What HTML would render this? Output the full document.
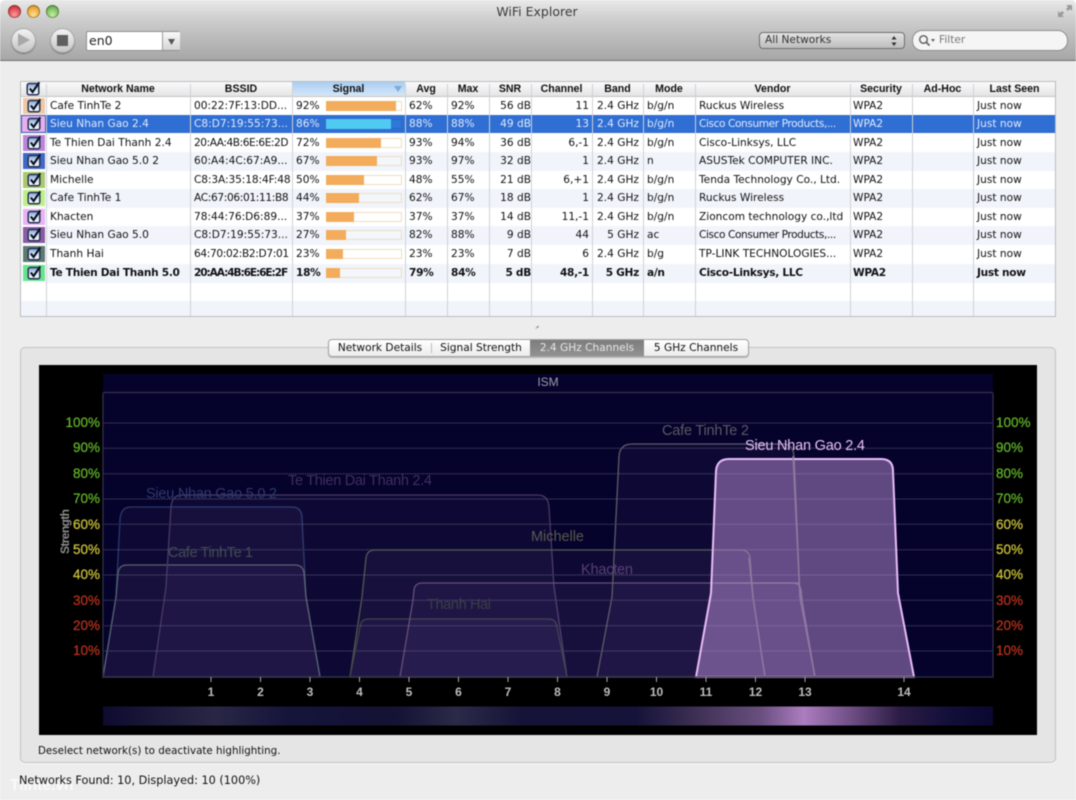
<!DOCTYPE html>
<html><head><meta charset="utf-8"><title>WiFi Explorer</title>
<style>
html,body{margin:0;padding:0;width:1076px;height:800px;overflow:hidden;background:#fff}
#w{position:relative;width:1076px;height:800px;background:#ededed;overflow:hidden;font:10.6px "DejaVu Sans",sans-serif;color:#111;border-radius:5px 5px 0 0;filter:blur(.4px)}
#w div,#w span,#w svg{position:absolute}
#tb{left:0;top:0;width:1076px;height:60px;background:linear-gradient(#e9e9e9,#cfcfcf 30%,#a6a6a6);border-bottom:1px solid #6f6f6f}
.l{width:13px;height:13px;border-radius:50%;top:5px;box-shadow:inset 0 0 0 1px rgba(0,0,0,.3)}
#title{left:-1px;width:1076px;text-align:center;top:4px;font-size:12.5px;color:#3a3a3a}
.rb{width:25px;height:25px;top:28px;border-radius:50%;background:linear-gradient(#f4f4f4,#c4c4c4);box-shadow:0 1px 1px rgba(0,0,0,.35),inset 0 0 0 1px #a5a5a5}
#cb{left:86px;top:31px;width:92px;height:18px;background:#fff;border:1px solid #8f8f8f;border-radius:2px}
#cba{left:75px;top:0;width:17px;height:18px;background:linear-gradient(#fafafa,#d5d5d5);border-left:1px solid #9a9a9a}
#pop{left:759px;top:32px;width:144px;height:15px;border:1px solid #6e6e6e;border-radius:4px;background:linear-gradient(#e2e2e2,#bdbdbd);font-size:10.6px;color:#333}
#fil{left:912px;top:30px;width:154px;height:19px;border:1px solid #8e8e8e;border-radius:10px;background:#f5f5f5;color:#777;font-size:10.6px}
#tbl{left:20px;top:81px;width:1034px;height:234px;background:#fff;border:1px solid #b9bcc1;overflow:hidden}
.h{top:0;height:14px;line-height:14px;text-align:center;font:bold 10.6px/14px "Liberation Sans",sans-serif;background:linear-gradient(#fbfbfb,#e4e4e4);border-bottom:1px solid #c5c5c5;color:#111}
.r{left:0;width:1035px;height:19px;line-height:19px;white-space:nowrap}
.a{background:#f1f5fb}
.s{background:#2f6ed2;color:#dfeaff}
.b{font-weight:bold;color:#111;letter-spacing:-.3px}
.sw{left:1px;top:0;width:24px;height:18px;box-sizing:border-box;border:1px solid #fff}
.r svg{left:6px;top:1px}
.bg{left:305px;top:4px;width:76px;height:10px;background:#fff;box-shadow:inset 0 0 0 1px #efdcc0}
.bg span{left:0;top:0;height:10px;background:#f2ac5c}
.a .bg{background:#f3f6fb}
.s .bg{background:#2d78d8;box-shadow:inset 0 0 0 1px #2b68c4}
.s .bg span{background:#4fcaf0}
.t{top:0}
.n{left:29px}.m{left:173px}.p{left:275px}.g{left:388px}.x{left:430px}
.o{width:56px;left:454px;text-align:right}
.c{width:58px;left:510px;text-align:right}
.f{width:50px;left:568px;text-align:right}
.d{left:626px}.v{left:678px}.e{left:832px}.j{left:956px}
.v2{top:2px;width:1px;height:233px;background:#ced1d6}
#pan{left:20px;top:347px;width:1034px;height:414px;background:#e5e5e5;border:1px solid #c2c2c2;border-radius:5px;box-shadow:0 1px 0 #f8f8f8}
#seg{left:328px;top:339px;width:419px;height:16px;background:linear-gradient(#fff,#ececec);border:1px solid #a2a2a2;border-radius:4px;line-height:17px;text-align:center;box-shadow:0 1px 1px rgba(0,0,0,.2);overflow:hidden}
#seg span{top:0;height:16px;color:#111}
#ch{left:39px;top:365px}
</style></head><body><div id="w">
<svg width="0" height="0" style="left:0;top:0"><defs>
<linearGradient id="k" x1="0" y1="0" x2="0" y2="1"><stop offset="0" stop-color="#7d9ed6"/><stop offset=".5" stop-color="#d8e5f6"/><stop offset="1" stop-color="#f2f6fc"/></linearGradient>
<symbol id="ck" viewBox="0 0 15 15"><rect x="1.2" y="2.5" width="11.6" height="11.3" rx="2" fill="url(#k)" stroke="#25304f" stroke-width="1.5"/><path d="M3.8 7.5L6.6 11L13.3 1.3" fill="none" stroke="#06101f" stroke-width="2.1"/></symbol>
<linearGradient id="st" x1="0" x2="1" y1="0" y2="0">
<stop offset="0" stop-color="#0e0b30"/><stop offset=".126" stop-color="#2a2745"/><stop offset=".21" stop-color="#15143a"/><stop offset=".33" stop-color="#141335"/><stop offset=".397" stop-color="#2b2a48"/><stop offset=".47" stop-color="#151438"/><stop offset=".6" stop-color="#16133a"/><stop offset=".66" stop-color="#3a2d50"/><stop offset=".74" stop-color="#6a4f80"/><stop offset=".787" stop-color="#ab7dbf"/><stop offset=".84" stop-color="#6f4f85"/><stop offset=".895" stop-color="#2c1c45"/><stop offset=".95" stop-color="#12103a"/><stop offset="1" stop-color="#0a0830"/>
</linearGradient></defs></svg>

<div id="tb">
<div class="l" style="left:8px;background:radial-gradient(circle at 50% 75%,#ff9a9a,#d8434a 60%,#a8262c)"></div>
<div class="l" style="left:27px;background:radial-gradient(circle at 50% 75%,#ffe08e,#e8a63a 60%,#b87d18)"></div>
<div class="l" style="left:46px;background:radial-gradient(circle at 50% 75%,#c6f0a0,#74b95c 60%,#4e8d3a)"></div>
<div id="title">WiFi Explorer</div>
<svg style="left:1057px;top:4px" width="16" height="14" viewBox="0 0 16 14"><path d="M9 1h6v6l-2-2-2 2-2-2 2-2zM1 13V7l2 2 2-2 2 2-2 2 2 2z" fill="#9a9a9a"/></svg>
<div class="rb" style="left:11px"></div>
<svg style="left:17px;top:33px" width="14" height="14"><path d="M1 0.500L13 7L1 13.500z" fill="#a8a8a8"/></svg>
<div class="rb" style="left:50px"></div>
<div style="left:57px;top:35px;width:11px;height:11px;background:#5f5f5f"></div>
<div id="cb"><span style="left:2px;top:1px;font-size:12.5px;color:#222">en0</span><div id="cba"><svg style="left:5px;top:7px" width="7" height="6"><path d="M0 0H7L3.500 6z" fill="#555"/></svg></div></div>
<div id="pop"><span style="left:5px;top:0;line-height:15px">All Networks</span><svg style="left:131px;top:3px" width="6" height="10"><path d="M3 0L5.500 3.500H.5zM3 10L.5 6.500H5.500z" fill="#333"/></svg></div>
<div id="fil"><svg style="left:5px;top:3px" width="18" height="13"><circle cx="5.500" cy="5.500" r="3.800" fill="none" stroke="#666" stroke-width="1.500"/><path d="M8.300 8.300L11.500 11.500" stroke="#666" stroke-width="1.800"/><path d="M13 5H17L15 8z" fill="#666"/></svg><span style="left:26px;top:3px">Filter</span></div>
</div>

<div id="tbl">
<div class="h" style="left:0;width:25px"><svg style="left:5px;top:-1px" width="15" height="15"><use href="#ck"/></svg></div>
<div class="h" style="left:25px;width:144px;">Network Name</div>
<div class="h" style="left:169px;width:102px">BSSID</div>
<div class="h" style="left:271px;width:113px;background:linear-gradient(#a9cff3,#d6e6f6)">Signal<svg style="left:102px;top:4px" width="8" height="6"><path d="M0 0H8L4 6z" fill="#7fabd8"/></svg></div>
<div class="h" style="left:384px;width:42px">Avg</div>
<div class="h" style="left:426px;width:42px">Max</div>
<div class="h" style="left:468px;width:42px">SNR</div>
<div class="h" style="left:510px;width:61px">Channel</div>
<div class="h" style="left:571px;width:51px">Band</div>
<div class="h" style="left:622px;width:52px">Mode</div>
<div class="h" style="left:674px;width:155px">Vendor</div>
<div class="h" style="left:829px;width:62px">Security</div>
<div class="h" style="left:891px;width:61px">Ad-Hoc</div>
<div class="h" style="left:952px;width:83px">Last Seen</div>

<div class="r" style="top:14.500px"><div class="sw" style="background:#efc9a6"></div><svg width="15" height="15"><use href="#ck"/></svg><span class="t n">Cafe TinhTe 2</span><span class="t m">00:22:7F:13:DD...</span><span class="t p">92%</span><div class="bg"><span style="width:70px"></span></div><span class="t g">62%</span><span class="t x">92%</span><span class="t o">56 dB</span><span class="t c">11</span><span class="t f">2.4 GHz</span><span class="t d">b/g/n</span><span class="t v">Ruckus Wireless</span><span class="t e">WPA2</span><span class="t j">Just now</span></div>
<div class="r s" style="top:33px;height:18px"><div class="sw" style="background:#e8aef2;left:0;width:25px;border-color:#2f5fae"></div><svg width="15" height="15"><use href="#ck"/></svg><span class="t n">Sieu Nhan Gao 2.4</span><span class="t m">C8:D7:19:55:73...</span><span class="t p">86%</span><div class="bg"><span style="width:65px"></span></div><span class="t g">88%</span><span class="t x">88%</span><span class="t o">49 dB</span><span class="t c">13</span><span class="t f">2.4 GHz</span><span class="t d">b/g/n</span><span class="t v" style="letter-spacing:-.42px">Cisco Consumer Products,...</span><span class="t e">WPA2</span><span class="t j">Just now</span></div>
<div class="r" style="top:51.500px"><div class="sw" style="background:#bd85d8"></div><svg width="15" height="15"><use href="#ck"/></svg><span class="t n">Te Thien Dai Thanh 2.4</span><span class="t m" style="letter-spacing:-.45px">20:AA:4B:6E:6E:2D</span><span class="t p">72%</span><div class="bg"><span style="width:55px"></span></div><span class="t g">93%</span><span class="t x">94%</span><span class="t o">36 dB</span><span class="t c">6,-1</span><span class="t f">2.4 GHz</span><span class="t d">b/g/n</span><span class="t v">Cisco-Linksys, LLC</span><span class="t e">WPA2</span><span class="t j">Just now</span></div>
<div class="r a" style="top:70px"><div class="sw" style="background:#4268c6"></div><svg width="15" height="15"><use href="#ck"/></svg><span class="t n">Sieu Nhan Gao 5.0 2</span><span class="t m">60:A4:4C:67:A9...</span><span class="t p">67%</span><div class="bg"><span style="width:51px"></span></div><span class="t g">93%</span><span class="t x">97%</span><span class="t o">32 dB</span><span class="t c">1</span><span class="t f">2.4 GHz</span><span class="t d">n</span><span class="t v">ASUSTek COMPUTER INC.</span><span class="t e">WPA2</span><span class="t j">Just now</span></div>
<div class="r" style="top:88.500px"><div class="sw" style="background:#a9c96c"></div><svg width="15" height="15"><use href="#ck"/></svg><span class="t n">Michelle</span><span class="t m" style="letter-spacing:-.1px">C8:3A:35:18:4F:48</span><span class="t p">50%</span><div class="bg"><span style="width:38px"></span></div><span class="t g">48%</span><span class="t x">55%</span><span class="t o">21 dB</span><span class="t c">6,+1</span><span class="t f">2.4 GHz</span><span class="t d">b/g/n</span><span class="t v">Tenda Technology Co., Ltd.</span><span class="t e">WPA2</span><span class="t j">Just now</span></div>
<div class="r a" style="top:107px"><div class="sw" style="background:#bdf08a"></div><svg width="15" height="15"><use href="#ck"/></svg><span class="t n">Cafe TinhTe 1</span><span class="t m" style="letter-spacing:-.35px">AC:67:06:01:11:B8</span><span class="t p">44%</span><div class="bg"><span style="width:33px"></span></div><span class="t g">62%</span><span class="t x">67%</span><span class="t o">18 dB</span><span class="t c">1</span><span class="t f">2.4 GHz</span><span class="t d">b/g/n</span><span class="t v">Ruckus Wireless</span><span class="t e">WPA2</span><span class="t j">Just now</span></div>
<div class="r" style="top:125.500px"><div class="sw" style="background:#eab2f6"></div><svg width="15" height="15"><use href="#ck"/></svg><span class="t n">Khacten</span><span class="t m">78:44:76:D6:89...</span><span class="t p">37%</span><div class="bg"><span style="width:28px"></span></div><span class="t g">37%</span><span class="t x">37%</span><span class="t o">14 dB</span><span class="t c">11,-1</span><span class="t f">2.4 GHz</span><span class="t d">b/g/n</span><span class="t v">Zioncom technology co.,ltd</span><span class="t e">WPA2</span><span class="t j">Just now</span></div>
<div class="r a" style="top:144px"><div class="sw" style="background:#8a5ca4"></div><svg width="15" height="15"><use href="#ck"/></svg><span class="t n">Sieu Nhan Gao 5.0</span><span class="t m">C8:D7:19:55:73...</span><span class="t p">27%</span><div class="bg"><span style="width:20px"></span></div><span class="t g">82%</span><span class="t x">88%</span><span class="t o">9 dB</span><span class="t c">44</span><span class="t f">5 GHz</span><span class="t d">ac</span><span class="t v" style="letter-spacing:-.42px">Cisco Consumer Products,...</span><span class="t e">WPA2</span><span class="t j">Just now</span></div>
<div class="r" style="top:162.500px"><div class="sw" style="background:#5f7a70"></div><svg width="15" height="15"><use href="#ck"/></svg><span class="t n">Thanh Hai</span><span class="t m" style="letter-spacing:-.35px">64:70:02:B2:D7:01</span><span class="t p">23%</span><div class="bg"><span style="width:17px"></span></div><span class="t g">23%</span><span class="t x">23%</span><span class="t o">7 dB</span><span class="t c">6</span><span class="t f">2.4 GHz</span><span class="t d">b/g</span><span class="t v">TP-LINK TECHNOLOGIES...</span><span class="t e">WPA2</span><span class="t j">Just now</span></div>
<div class="r a b" style="top:181.500px"><div class="sw" style="background:#68e48e"></div><svg width="15" height="15"><use href="#ck"/></svg><span class="t n">Te Thien Dai Thanh 5.0</span><span class="t m" style="letter-spacing:-1.100px">20:AA:4B:6E:6E:2F</span><span class="t p">18%</span><div class="bg"><span style="width:14px"></span></div><span class="t g">79%</span><span class="t x">84%</span><span class="t o">5 dB</span><span class="t c">48,-1</span><span class="t f">5 GHz</span><span class="t d">a/n</span><span class="t v">Cisco-Linksys, LLC</span><span class="t e">WPA2</span><span class="t j">Just now</span></div>
<div class="r a" style="top:218.500px;height:16px"></div>

<div class="v2" style="left:25px"></div><div class="v2" style="left:169px"></div><div class="v2" style="left:271px"></div><div class="v2" style="left:384px"></div><div class="v2" style="left:426px"></div><div class="v2" style="left:468px"></div><div class="v2" style="left:510px"></div><div class="v2" style="left:571px"></div><div class="v2" style="left:622px"></div><div class="v2" style="left:674px"></div><div class="v2" style="left:829px"></div><div class="v2" style="left:891px"></div><div class="v2" style="left:952px"></div>
</div>

<svg style="left:534px;top:324px" width="6" height="6"><path d="M1 5L4 1.500L5 3z" fill="#888"/></svg>

<div id="pan"></div>
<svg id="ch" width="998" height="370" viewBox="39 365 998 370">
<rect x="39" y="365" width="998" height="370" fill="#000"/>
<rect x="103" y="374" width="890" height="303" fill="#05022b"/>
<path d="M103 392.500H993" stroke="#34324a" stroke-width="1.200"/>
<path d="M103 423H993M103 448.300H993M103 473.700H993M103 499H993M103 524.300H993M103 549.700H993M103 575H993M103 600.300H993M103 625.700H993M103 651H993" stroke="#5d5b76" stroke-width="1" stroke-dasharray="1 1"/>
<g stroke-width="1.300" fill="rgb(140,115,180)" fill-opacity=".07">
<path d="M103 677L116 597L120 519Q121 507 131 507H292Q302 507 302 519L306 597L320 677z" stroke="#2a3a6c"/>
<path d="M103 677L116 597L118 573Q119 565 127 565H295Q303 565 304 573L306 597L320 677z" stroke="#56646c"/>
<path d="M153 677L166 587L171 507Q172 495 182 495H538Q548 495 549 507L554 587L567 677z" stroke="#4a3a64"/>
<path d="M350 677L362 597L366 558Q367 550 375 550H741Q749 550 750 558L753 597L765 677z" stroke="#565650"/>
<path d="M350 677L360 627Q361 619 368 619H549Q556 619 557 627L567 677z" stroke="#3e434a"/>
<path d="M400 677L413 600L414 590Q415 583 422 583H793Q800 583 801 590L802 600L815 677z" stroke="#64507a"/>
<path d="M597 677L612 597L619 456Q620 444 632 444H783Q793 444 794 456L800 597L815 677z" stroke="#5e5c68"/>
</g>
<path d="M696 677L711 593L716 471Q717 459 729 459H881Q893 459 893 471L898 593L914 677z" fill="#bb90d8" fill-opacity=".5" stroke="#e8bcf6" stroke-width="2"/>
<g stroke="#8f7b9f" stroke-width="1.300" fill="none"><path d="M749 558L753 597L765 677"/><path d="M793 456L800 597L815 677M801 590L802 600"/><path d="M716 583H800"/></g>
<path d="M103 393V677H993V393" fill="none" stroke="#32314a" stroke-width="1.300"/>
<path d="M211 677v5M260.500 677v5M310 677v5M359.500 677v5M409 677v5M458.500 677v5M508 677v5M557.500 677v5M607 677v5M656.500 677v5M706 677v5M755.500 677v5M805 677v5M904 677v5" stroke="#aaa"/>
<g font-family="'Liberation Sans',sans-serif" font-size="12" font-weight="bold" fill="#bdbdbd" text-anchor="middle">
<text x="211" y="696">1</text><text x="260.500" y="696">2</text><text x="310" y="696">3</text><text x="359.500" y="696">4</text><text x="409" y="696">5</text><text x="458.500" y="696">6</text><text x="508" y="696">7</text><text x="557.500" y="696">8</text><text x="607" y="696">9</text><text x="656.500" y="696">10</text><text x="706" y="696">11</text><text x="755.500" y="696">12</text><text x="805" y="696">13</text><text x="904" y="696">14</text>
</g>
<g font-family="'Liberation Sans',sans-serif" font-size="13.500" text-anchor="end" stroke-width=".25">
<g fill="#62b52a" stroke="#62b52a"><text x="100" y="427">100%</text><text x="100" y="452">90%</text><text x="100" y="478">80%</text><text x="100" y="503">70%</text></g>
<g fill="#cdc43a" stroke="#cdc43a"><text x="100" y="529">60%</text><text x="100" y="554">50%</text><text x="100" y="579">40%</text></g>
<g fill="#b8321f" stroke="#b8321f"><text x="100" y="605">30%</text><text x="100" y="630">20%</text><text x="100" y="655">10%</text></g>
</g>
<g font-family="'Liberation Sans',sans-serif" font-size="13.500" stroke-width=".25">
<g fill="#62b52a" stroke="#62b52a"><text x="996" y="427">100%</text><text x="996" y="452">90%</text><text x="996" y="478">80%</text><text x="996" y="503">70%</text></g>
<g fill="#cdc43a" stroke="#cdc43a"><text x="996" y="529">60%</text><text x="996" y="554">50%</text><text x="996" y="579">40%</text></g>
<g fill="#b8321f" stroke="#b8321f"><text x="996" y="605">30%</text><text x="996" y="630">20%</text><text x="996" y="655">10%</text></g>
</g>
<text transform="translate(69 554) rotate(-90)" font-family="'Liberation Sans',sans-serif" font-size="12" font-weight="bold" fill="#8c8c8c" textLength="45">Strength</text>
<text x="548" y="386" font-family="'Liberation Sans',sans-serif" font-size="12" fill="#9d9cab" text-anchor="middle">ISM</text>
<g font-family="'Liberation Sans',sans-serif" font-size="14.500">
<text x="146" y="498" fill="#2d3a70" textLength="131">Sieu Nhan Gao 5.0 2</text>
<text x="288" y="485" fill="#402f60" textLength="144">Te Thien Dai Thanh 2.4</text>
<text x="168" y="557" fill="#414d52" textLength="85">Cafe TinhTe 1</text>
<text x="531" y="541" fill="#5a5a50" textLength="53">Michelle</text>
<text x="581" y="574" fill="#5a3f78" textLength="52">Khacten</text>
<text x="427" y="609" fill="#3a3f45" textLength="64">Thanh Hai</text>
<text x="662" y="435" fill="#5a5a62" textLength="87">Cafe TinhTe 2</text>
<text x="745" y="450" fill="#e6c0f6" textLength="120">Sieu Nhan Gao 2.4</text>
</g>
<rect x="103" y="706.500" width="890" height="19" fill="url(#st)"/>
</svg>

<div id="seg">
<span style="left:0;width:102px">Network Details</span>
<div style="left:102px;top:3px;width:1px;height:10px;background:#bbb"></div>
<span style="left:103px;width:98px">Signal Strength</span>
<span style="left:201px;width:114px;background:linear-gradient(#7d7d7d,#929292);color:#e6e6e6">2.4 GHz Channels</span>
<span style="left:315px;width:104px">5 GHz Channels</span>
</div>

<div style="left:38px;top:745px;font-size:10.300px">Deselect network(s) to deactivate highlighting.</div>
<div style="left:10px;top:777px;font:bold 15.500px 'Liberation Sans',sans-serif;color:rgba(255,255,255,.7)">Tilnte.vn</div>
<div style="left:19px;top:774px;font-size:11.250px">Networks Found: 10, Displayed: 10 (100%)</div>
</div></body></html>
